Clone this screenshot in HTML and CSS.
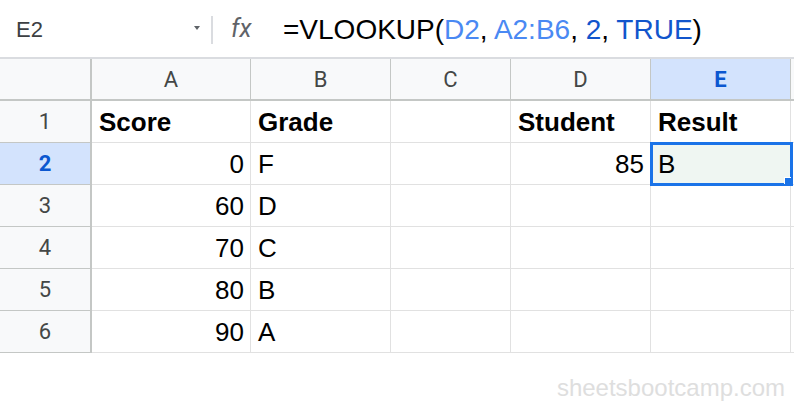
FILE: index.html
```html
<!DOCTYPE html>
<html>
<head>
<meta charset="utf-8">
<link rel="stylesheet" href="styles.css">
</head>
<body>
<div class="page">
  <div class="fbar">
    <div class="namebox">
      <span class="cellref">E2</span>
      <span class="caret"></span>
    </div>
    <span class="sep"></span>
    <span class="fx">fx</span>
    <span class="formula">=VLOOKUP(<span class="ref">D2</span>, <span class="ref">A2:B6</span>, <span class="num">2</span>, <span class="num">TRUE</span>)</span>
  </div>
  <div class="grid">
    <div class="hd corner"></div>
    <div class="hd col">A</div>
    <div class="hd col">B</div>
    <div class="hd col">C</div>
    <div class="hd col">D</div>
    <div class="hd col sel">E</div>
    <div class="hd fill"></div>

    <div class="rh">1</div>
    <div class="c b">Score</div>
    <div class="c b">Grade</div>
    <div class="c"></div>
    <div class="c b">Student</div>
    <div class="c b">Result</div>
    <div class="c fill"></div>

    <div class="rh sel">2</div>
    <div class="c r">0</div>
    <div class="c">F</div>
    <div class="c"></div>
    <div class="c r">85</div>
    <div class="c active">B</div>
    <div class="c fill"></div>

    <div class="rh">3</div>
    <div class="c r">60</div>
    <div class="c">D</div>
    <div class="c"></div>
    <div class="c"></div>
    <div class="c"></div>
    <div class="c fill"></div>

    <div class="rh">4</div>
    <div class="c r">70</div>
    <div class="c">C</div>
    <div class="c"></div>
    <div class="c"></div>
    <div class="c"></div>
    <div class="c fill"></div>

    <div class="rh">5</div>
    <div class="c r">80</div>
    <div class="c">B</div>
    <div class="c"></div>
    <div class="c"></div>
    <div class="c"></div>
    <div class="c fill"></div>

    <div class="rh">6</div>
    <div class="c r">90</div>
    <div class="c">A</div>
    <div class="c"></div>
    <div class="c"></div>
    <div class="c"></div>
    <div class="c fill"></div>
  </div>
  <div class="mark">sheetsbootcamp.com</div>
</div>
</body>
</html>
```

FILE: styles.css
```css
* { box-sizing: border-box; }
html, body { margin: 0; padding: 0; background: #ffffff; }
.page {
  width: 794px;
  height: 414px;
  overflow: hidden;
  font-family: "Liberation Sans", Arial, sans-serif;
}
.fbar {
  height: 59px;
  border-bottom: 2px solid #dadce0;
  display: flex;
  align-items: center;
}
.namebox {
  width: 211px;
  display: flex;
  align-items: center;
  padding-left: 16px;
}
.cellref {
  font-size: 22px;
  color: #3c4043;
  flex: 1;
  line-height: 26px;
  padding-top: 3px;
}
.caret {
  width: 0;
  height: 0;
  border-left: 3px solid transparent;
  border-right: 3px solid transparent;
  border-top: 4px solid #5f6368;
  margin-right: 11px;
  margin-top: -2px;
}
.sep {
  width: 2px;
  height: 28px;
  background: #dadce0;
  margin-top: 2px;
}
.fx {
  font-family: Roboto, "Liberation Sans", sans-serif;
  font-style: italic;
  font-size: 25px;
  color: #5f6368;
  margin-left: 18px;
  width: 52px;
  line-height: 28px;
  padding-top: 1px;
}
.formula {
  font-size: 28px;
  color: #000000;
  line-height: 32px;
  padding-top: 2px;
}
.ref { color: #4a89f3; }
.num { color: #1155cc; }

.grid {
  display: grid;
  grid-template-columns: 92px 159px 140px 120px 140px 140px 1fr;
  grid-auto-rows: 42px;
}
.hd {
  background: #f8f9fa;
  border-right: 1px solid #c4c7c5;
  border-bottom: 2px solid #c4c7c5;
  font-family: Roboto, "Liberation Sans", sans-serif;
  font-size: 22px;
  color: #444746;
  display: flex;
  align-items: center;
  justify-content: center;
}
.hd.corner { border-right: 2px solid #c4c7c5; }
.hd.sel {
  background: #d3e3fd;
  color: #0b57d0;
  font-weight: bold;
}
.hd.fill { border-right: none; }
.rh {
  background: #f8f9fa;
  border-right: 2px solid #c4c7c5;
  border-bottom: 1px solid #c4c7c5;
  font-family: Roboto, "Liberation Sans", sans-serif;
  font-size: 22px;
  color: #444746;
  display: flex;
  align-items: center;
  justify-content: center;
}
.rh.sel {
  background: #d3e3fd;
  color: #0b57d0;
  font-weight: bold;
}
.c {
  border-right: 1px solid #e1e1e1;
  border-bottom: 1px solid #e1e1e1;
  font-size: 26px;
  line-height: 30px;
  color: #000000;
  display: flex;
  align-items: flex-end;
  padding: 0 6px 5px 7px;
}
.c.b { font-weight: bold; }
.c.r { justify-content: flex-end; }
.c.fill { border-right: none; padding: 0; }
.c.active {
  background: #eff6f2;
  position: relative;
}
.c.active::after {
  content: "";
  position: absolute;
  left: -1px;
  top: -1px;
  right: -3px;
  bottom: -2px;
  border: 3px solid #1a73e8;
}
.c.active::before {
  content: "";
  position: absolute;
  right: -1px;
  bottom: 0px;
  width: 6px;
  height: 6px;
  background: #1a73e8;
  border-left: 1px solid #ffffff;
  border-top: 1px solid #ffffff;
  z-index: 2;
}
.mark {
  text-align: right;
  padding-right: 9px;
  margin-top: 21px;
  font-size: 24px;
  color: #dedede;
}
```
